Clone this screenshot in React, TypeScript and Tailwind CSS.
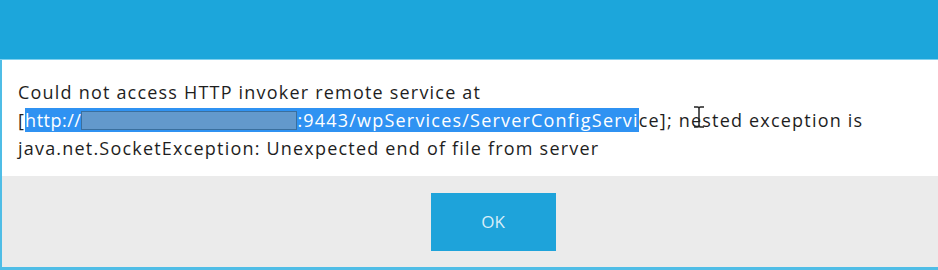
import React from "react";

const IBeam: React.FC = () => (
  <svg
    className="absolute left-[693px] top-[106px]"
    width="12"
    height="22"
    viewBox="0 0 12 22"
    fill="none"
    stroke="#222"
    strokeWidth="1.5"
  >
    <path d="M1 1h3.5c1 0 1.5.5 1.5 1.5M11 1H7.5C6.5 1 6 1.5 6 2.5V19.5c0 1-.5 1.5-1.5 1.5H1M6 19.5c0 1 .5 1.5 1.5 1.5H11" />
  </svg>
);

export default function App() {
  return (
    <div
      className="relative flex h-[270px] w-[938px] flex-col overflow-hidden bg-white"
      style={{ fontFamily: '"Open Sans", "Noto Sans", sans-serif' }}
    >
      {/* Title bar */}
      <div className="h-[60px] shrink-0 bg-[#1ca6db] border-b border-[#7fd0ee]" />

      <div className="flex flex-1 flex-col border-l-2 border-[#4fbde6]">
        {/* Message */}
        <div className="h-[116px] shrink-0 bg-white pl-[16px] pt-[18px] text-[18px] leading-[28px] tracking-[1.2px] text-[#1e1e1e]">
          <p>Could not access HTTP invoker remote service at</p>
          <p>
            [
            <span className="bg-[#2f92f2] text-white">
              <span className="tracking-[0.5px]">http://</span>
              <span className="inline-block h-[19px] w-[216px] translate-y-[3px] border border-[#3a6f9e] bg-[#6399cc] align-baseline" />
              :9443/wpServices/ServerConfigServi
            </span>
            ce]; nested exception is
          </p>
          <p>java.net.SocketException: Unexpected end of file from server</p>
        </div>

        {/* Footer */}
        <div className="flex flex-1 items-start justify-center bg-[#ebebeb] pt-[17px]">
          <button className="ml-[46px] h-[58px] w-[125px] bg-[#1ea3da] text-[17px] text-[#d7eef9]">
            OK
          </button>
        </div>
      </div>

      <div className="h-[3px] shrink-0 bg-[#4fbde6]" />
      <IBeam />
    </div>
  );
}
